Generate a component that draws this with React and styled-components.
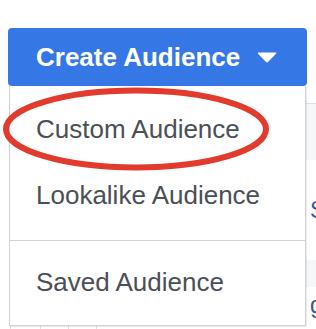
import React from 'react';
import styled, { createGlobalStyle } from 'styled-components';

const GlobalStyle = createGlobalStyle`
  html, body {
    margin: 0;
    padding: 0;
    background: #ffffff;
    overflow: hidden;
  }
  body {
    font-family: "Liberation Sans", Arial, sans-serif;
  }
`;

const items = [
  { label: 'Custom Audience', group: 0 },
  { label: 'Lookalike Audience', group: 0 },
  { label: 'Saved Audience', group: 1 },
];

const App = () => {
  return (
    <>
      <GlobalStyle />
      <Page>
        <Dropdown>
          <CreateButton>
            <span>Create Audience</span>
            <Caret viewBox="0 0 20 11">
              <path d="M1.5 0.5 H18.5 Q20 0.5 19 1.7 L11.2 9.8 Q10 11 8.8 9.8 L1 1.7 Q0 0.5 1.5 0.5 Z" fill="#ffffff" />
            </Caret>
          </CreateButton>
          <Menu>
            <MenuGroup>
              {items.filter((i) => i.group === 0).map((item) => (
                <MenuItem key={item.label}>{item.label}</MenuItem>
              ))}
            </MenuGroup>
            <MenuGroup $divided>
              {items.filter((i) => i.group === 1).map((item) => (
                <MenuItem key={item.label}>{item.label}</MenuItem>
              ))}
            </MenuGroup>
          </Menu>
          <Highlight viewBox="0 0 268 84">
            <ellipse cx="134" cy="42" rx="130" ry="38.5" fill="none" stroke="#e23b2e" strokeWidth="6" />
          </Highlight>
        </Dropdown>
        <Table>
          <HeaderRow />
          <Row $shade $height={56} />
          <Row $height={100}><NameCell>Sa</NameCell></Row>
          <Row $shade $height={27} />
          <Row $height={37}><NameCell>g</NameCell></Row>
          <CellRow>
            <Cell />
            <Cell />
            <Cell />
            <Cell />
          </CellRow>
        </Table>
      </Page>
    </>
  );
};

export default App;

const Page = styled.div`
  display: flex;
  flex-direction: column;
  padding-top: 28px;
  padding-left: 8px;
  width: 400px;
`;

const Dropdown = styled.div`
  position: relative;
  width: 299px;
  z-index: 2;
`;

const CreateButton = styled.div`
  display: flex;
  align-items: center;
  gap: 17px;
  box-sizing: border-box;
  height: 58px;
  padding: 0 29px 0 28px;
  background: #3578e5;
  border-radius: 4px;
  color: #ffffff;
  font-size: 26px;
  font-weight: 700;
  letter-spacing: 0px;
`;

const Caret = styled.svg`
  width: 20px;
  height: 11px;
  margin-top: 1px;
`;

const Menu = styled.div`
  position: absolute;
  top: 100%;
  left: 1px;
  width: 297px;
  box-sizing: border-box;
  background: #ffffff;
  border: 1px solid #cfd2d6;
  border-top: none;
  box-shadow: 1px 1px 1px rgba(0, 0, 0, 0.08);
`;

const MenuGroup = styled.div`
  display: flex;
  flex-direction: column;
  padding: ${(p) => (p.$divided ? '8px 0 10px' : '10px 0 12px')};
  border-top: ${(p) => (p.$divided ? '1px solid #cfd2d6' : 'none')};
`;

const MenuItem = styled.div`
  display: flex;
  align-items: center;
  height: 66px;
  padding-left: 26px;
  color: #4b4f56;
  font-size: 26px;
`;

const Highlight = styled.svg`
  position: absolute;
  left: -6px;
  top: 59px;
  width: 268px;
  height: 84px;
  pointer-events: none;
`;

const Table = styled.div`
  display: flex;
  flex-direction: column;
  margin-left: 2px;
`;

const HeaderRow = styled.div`
  height: 17px;
  border-bottom: 1px solid #dddfe2;
`;

const Row = styled.div`
  display: flex;
  align-items: center;
  height: ${(p) => p.$height}px;
  background: ${(p) => (p.$shade ? '#f6f7f9' : '#ffffff')};
`;

const NameCell = styled.div`
  padding-left: 300px;
  color: #365899;
  font-size: 23px;
`;

const CellRow = styled.div`
  display: grid;
  grid-template-columns: 30px 28px 28px 1fr;
  height: 20px;
`;

const Cell = styled.div`
  border-left: 1px solid #dddfe2;
`;
